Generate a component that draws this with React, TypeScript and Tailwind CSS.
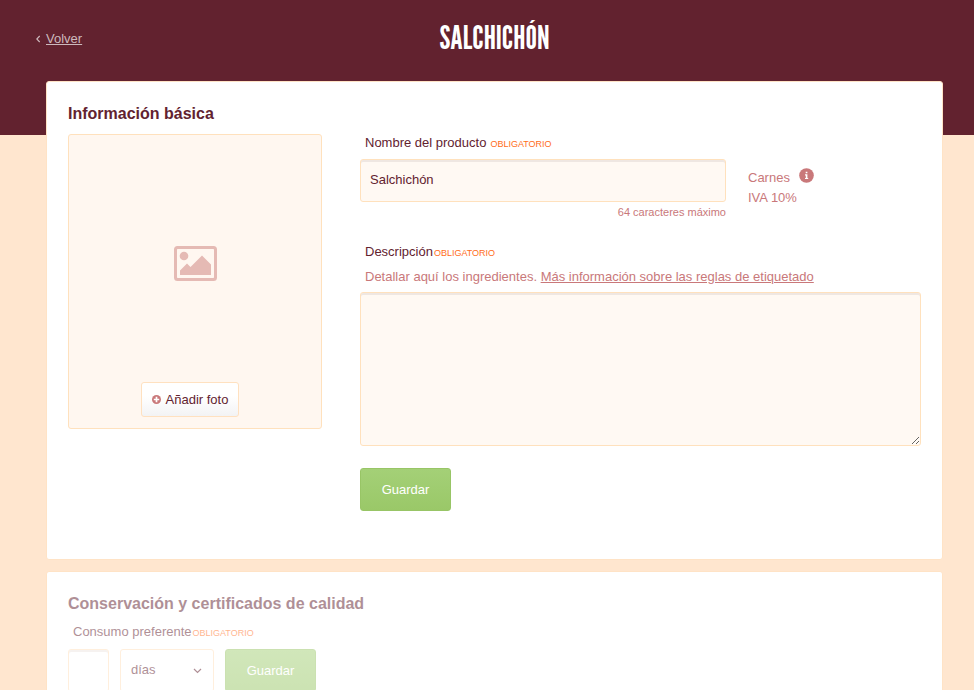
import { useState } from 'react';
import type { ReactNode } from 'react';

interface FieldLabelProps {
  htmlFor: string;
  children: ReactNode;
  wide?: boolean;
}

function FieldLabel({ htmlFor, children, wide }: FieldLabelProps) {
  return (
    <label
      htmlFor={htmlFor}
      className={`flex items-baseline px-[5px] text-[13px] leading-[18px] text-[#62222f] ${wide ? 'gap-1' : 'gap-px'}`}
    >
      {children}
      <span className="text-[9px] leading-none text-[#ff6d1a]">OBLIGATORIO</span>
    </label>
  );
}

function SaveButton() {
  return (
    <button
      type="submit"
      className="h-[43px] w-[91px] rounded-[3px] border border-[#98c566] bg-linear-to-b from-[#a4d077] to-[#9ac868] text-[13px] text-white"
    >
      Guardar
    </button>
  );
}

function ImageIcon() {
  return (
    <svg viewBox="0 0 43 35" className="h-[35px] w-[43px] text-[#e5bab4]" fill="currentColor" aria-hidden="true">
      <path
        fillRule="evenodd"
        d="M3.5 0h36A3.5 3.5 0 0 1 43 3.5v28a3.5 3.5 0 0 1-3.5 3.5h-36A3.5 3.5 0 0 1 0 31.5v-28A3.5 3.5 0 0 1 3.5 0ZM3.7 3a.7.7 0 0 0-.7.7v27.6a.7.7 0 0 0 .7.7h35.6a.7.7 0 0 0 .7-.7V3.7a.7.7 0 0 0-.7-.7Z"
      />
      <circle cx="10" cy="10" r="4.3" />
      <path d="M6 29v-4.5l7-7 3.5 3.5L28 9.5l9 9V29Z" />
    </svg>
  );
}

export default function App() {
  const [name, setName] = useState('Salchichón');
  const [description, setDescription] = useState('');
  const [amount, setAmount] = useState('');
  const [unit, setUnit] = useState('días');

  return (
    <div className="h-screen overflow-y-auto bg-[#ffe6cf] font-['Liberation_Sans',Arial,sans-serif] text-[13px] text-[#62222f] [scrollbar-width:none]">
      <header className="grid h-[135px] grid-cols-[1fr_auto_1fr] items-start bg-[#62222f] pt-[19px] pr-[31px] pl-[46px]">
        <a href="#volver" className="-ml-[11px] flex items-center gap-[4px] pt-[10px] leading-5 text-[#cdb9bd]">
          <svg viewBox="0 0 7 8" className="h-2 w-[7px]" fill="none" stroke="currentColor" strokeWidth="1.1" aria-hidden="true">
            <path d="M4.7 1 1.8 4l2.9 3" />
          </svg>
          <span className="underline">Volver</span>
        </a>
        <h1 className="font-['League_Gothic','Bebas_Neue','Roboto_Condensed',Roboto,sans-serif] text-[32px] leading-9 font-normal text-white">
          SALCHICHÓN
        </h1>
      </header>

      <main className="-mt-[54px] flex flex-col gap-[11px] pr-[31px] pb-8 pl-[46px]">
        <section className="rounded-[3px] border border-[#ffe3c6] bg-white px-[21px] pt-5 pb-12">
          <h2 className="text-base leading-6 font-bold">Información básica</h2>

          <div className="mt-2 flex items-start gap-[38px]">
            <div className="flex h-[295px] w-[254px] shrink-0 flex-col items-center justify-between rounded-[3px] border border-[#ffe1bd] bg-[#fff7f0] pt-[111px] pb-[11px]">
              <ImageIcon />
              <button
                type="button"
                className="mr-[10px] flex h-[35px] w-[98px] items-center justify-center gap-[5px] rounded-[3px] border border-[#ffe1c0] bg-linear-to-b from-white from-40% to-[#f3f3f4]"
              >
                <svg viewBox="0 0 9 9" className="size-[9px] text-[#c9787a]" aria-hidden="true">
                  <circle cx="4.5" cy="4.5" r="4.5" fill="currentColor" />
                  <path d="M4.5 1.8v5.4M1.8 4.5h5.4" stroke="white" strokeWidth="1.7" />
                </svg>
                Añadir foto
              </button>
            </div>

            <form className="min-w-0 flex-1" onSubmit={(e) => e.preventDefault()}>
              <div className="flex gap-[22px]">
                <div className="w-[366px]">
                  <FieldLabel htmlFor="name" wide>
                    Nombre del producto
                  </FieldLabel>
                  <input
                    id="name"
                    type="text"
                    maxLength={64}
                    value={name}
                    onChange={(e) => setName(e.target.value)}
                    className="mt-[7px] block h-[43px] w-full rounded-[3px] border border-[#ffe1bd] bg-[#fff9f3] px-[9px] pb-[2px] shadow-[inset_0_2px_0_#efe7e2] outline-none"
                  />
                  <p className="text-right text-[11px] leading-5 text-[#c9787a]">64 caracteres máximo</p>
                </div>
                <div className="flex items-start gap-[2px] pt-[34px] leading-5 text-[#c9787a]">
                  <p>
                    Carnes
                    <br />
                    IVA 10%
                  </p>
                  <button type="button" aria-label="Más información">
                    <svg viewBox="0 0 15 15" className="size-[15px]" aria-hidden="true">
                      <circle cx="7.5" cy="7.5" r="7.3" fill="#c9787a" />
                      <path d="M6.7 3.7h1.7v1.6H6.7ZM6 6.3h2.4V10h.8v1.100H6V10h.8V7.400H6Z" fill="white" />
                    </svg>
                  </button>
                </div>
              </div>

              <div className="mt-[21px]">
                <FieldLabel htmlFor="description">Descripción</FieldLabel>
                <p className="mt-[6px] px-[5px] leading-5 text-[#c9787a]">
                  Detallar aquí los ingredientes.{' '}
                  <a href="#etiquetado" className="underline">
                    Más información sobre las reglas de etiquetado
                  </a>
                </p>
                <textarea
                  id="description"
                  value={description}
                  onChange={(e) => setDescription(e.target.value)}
                  className="mt-[5px] block h-[154px] w-full resize rounded-[3px] border border-[#ffe1bd] bg-[#fff9f3] px-[9px] py-2 shadow-[inset_0_2px_0_#efe7e2] outline-none"
                />
              </div>

              <div className="mt-[22px]">
                <SaveButton />
              </div>
            </form>
          </div>
        </section>

        <section className="rounded-[3px] border border-[#ffe3c6] bg-white px-[21px] pt-5 pb-12">
          <form className="opacity-50" onSubmit={(e) => e.preventDefault()}>
            <h2 className="text-base leading-6 font-bold">Conservación y certificados de calidad</h2>
            <div className="mt-[7px]">
              <FieldLabel htmlFor="amount">Consumo preferente</FieldLabel>
            </div>
            <div className="mt-2 flex gap-[11px]">
              <input
                id="amount"
                type="text"
                value={amount}
                onChange={(e) => setAmount(e.target.value)}
                className="h-[43px] w-[41px] rounded-[3px] border border-[#ffe1bd] bg-white px-2 shadow-[inset_0_2px_0_#efe7e2] outline-none"
              />
              <div className="grid w-[94px] items-center">
                <select
                  aria-label="Unidad"
                  value={unit}
                  onChange={(e) => setUnit(e.target.value)}
                  className="col-start-1 row-start-1 h-[43px] appearance-none rounded-[3px] border border-[#ffe1bd] bg-white px-[10px] pb-[2px] outline-none"
                >
                  <option>días</option>
                  <option>meses</option>
                </select>
                <svg
                  viewBox="0 0 9 6"
                  className="pointer-events-none col-start-1 row-start-1 mr-3 h-[6px] w-[9px] justify-self-end"
                  fill="none"
                  stroke="currentColor"
                  strokeWidth="1.2"
                  aria-hidden="true"
                >
                  <path d="m1 1 3.5 3.5L8 1" />
                </svg>
              </div>
              <SaveButton />
            </div>
          </form>
        </section>
      </main>
    </div>
  );
}
